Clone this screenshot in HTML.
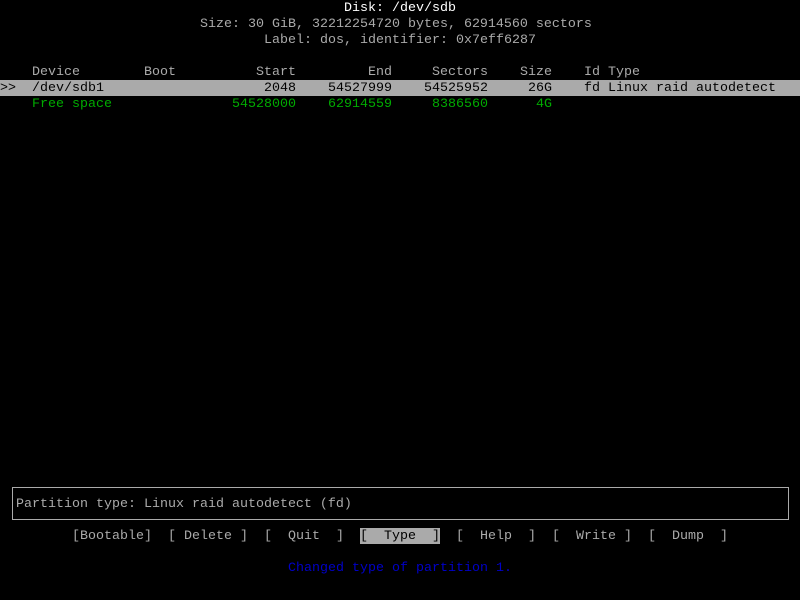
<!DOCTYPE html>
<html><head><style>
html,body{margin:0;padding:0;background:#000;width:800px;height:600px;overflow:hidden}
body{position:relative;font-family:"Liberation Mono",monospace;font-size:13.33px;color:#aaaaaa}
.s{position:absolute;white-space:pre;line-height:14px;height:14px;padding-top:2px}
.g{color:#00aa00}
.b{color:#0000c8}
.hl{background:#aaaaaa;color:#000}
</style></head><body>
<div class="s" style="left:344px;top:0;color:#fff">Disk: /dev/sdb</div>
<div class="s" style="left:200px;top:16px">Size: 30 GiB, 32212254720 bytes, 62914560 sectors</div>
<div class="s" style="left:264px;top:32px">Label: dos, identifier: 0x7eff6287</div>

<div class="s" style="left:32px;top:64px">Device</div>
<div class="s" style="left:144px;top:64px">Boot</div>
<div class="s" style="left:256px;top:64px">Start</div>
<div class="s" style="left:368px;top:64px">End</div>
<div class="s" style="left:432px;top:64px">Sectors</div>
<div class="s" style="left:520px;top:64px">Size</div>
<div class="s" style="left:584px;top:64px">Id Type</div>

<div class="s hl" style="left:0;top:80px;width:800px"></div>
<div class="s" style="left:0;top:80px;color:#000">&gt;&gt;</div>
<div class="s" style="left:32px;top:80px;color:#000">/dev/sdb1</div>
<div class="s" style="left:264px;top:80px;color:#000">2048</div>
<div class="s" style="left:328px;top:80px;color:#000">54527999</div>
<div class="s" style="left:424px;top:80px;color:#000">54525952</div>
<div class="s" style="left:528px;top:80px;color:#000">26G</div>
<div class="s" style="left:584px;top:80px;color:#000">fd Linux raid autodetect</div>

<div class="s g" style="left:32px;top:96px">Free space</div>
<div class="s g" style="left:232px;top:96px">54528000</div>
<div class="s g" style="left:328px;top:96px">62914559</div>
<div class="s g" style="left:432px;top:96px">8386560</div>
<div class="s g" style="left:536px;top:96px">4G</div>

<div style="position:absolute;left:12px;top:487px;width:775px;height:31px;border:1px solid #aaaaaa"></div>
<div class="s" style="left:16px;top:496px">Partition type: Linux raid autodetect (fd)</div>

<div class="s" style="left:72px;top:528px">[Bootable]</div>
<div class="s" style="left:168px;top:528px">[ Delete ]</div>
<div class="s" style="left:264px;top:528px">[  Quit  ]</div>
<div class="s hl" style="left:360px;top:528px">[  Type  ]</div>
<div class="s" style="left:456px;top:528px">[  Help  ]</div>
<div class="s" style="left:552px;top:528px">[  Write ]</div>
<div class="s" style="left:648px;top:528px">[  Dump  ]</div>

<div class="s b" style="left:288px;top:560px">Changed type of partition 1.</div>
</body></html>
